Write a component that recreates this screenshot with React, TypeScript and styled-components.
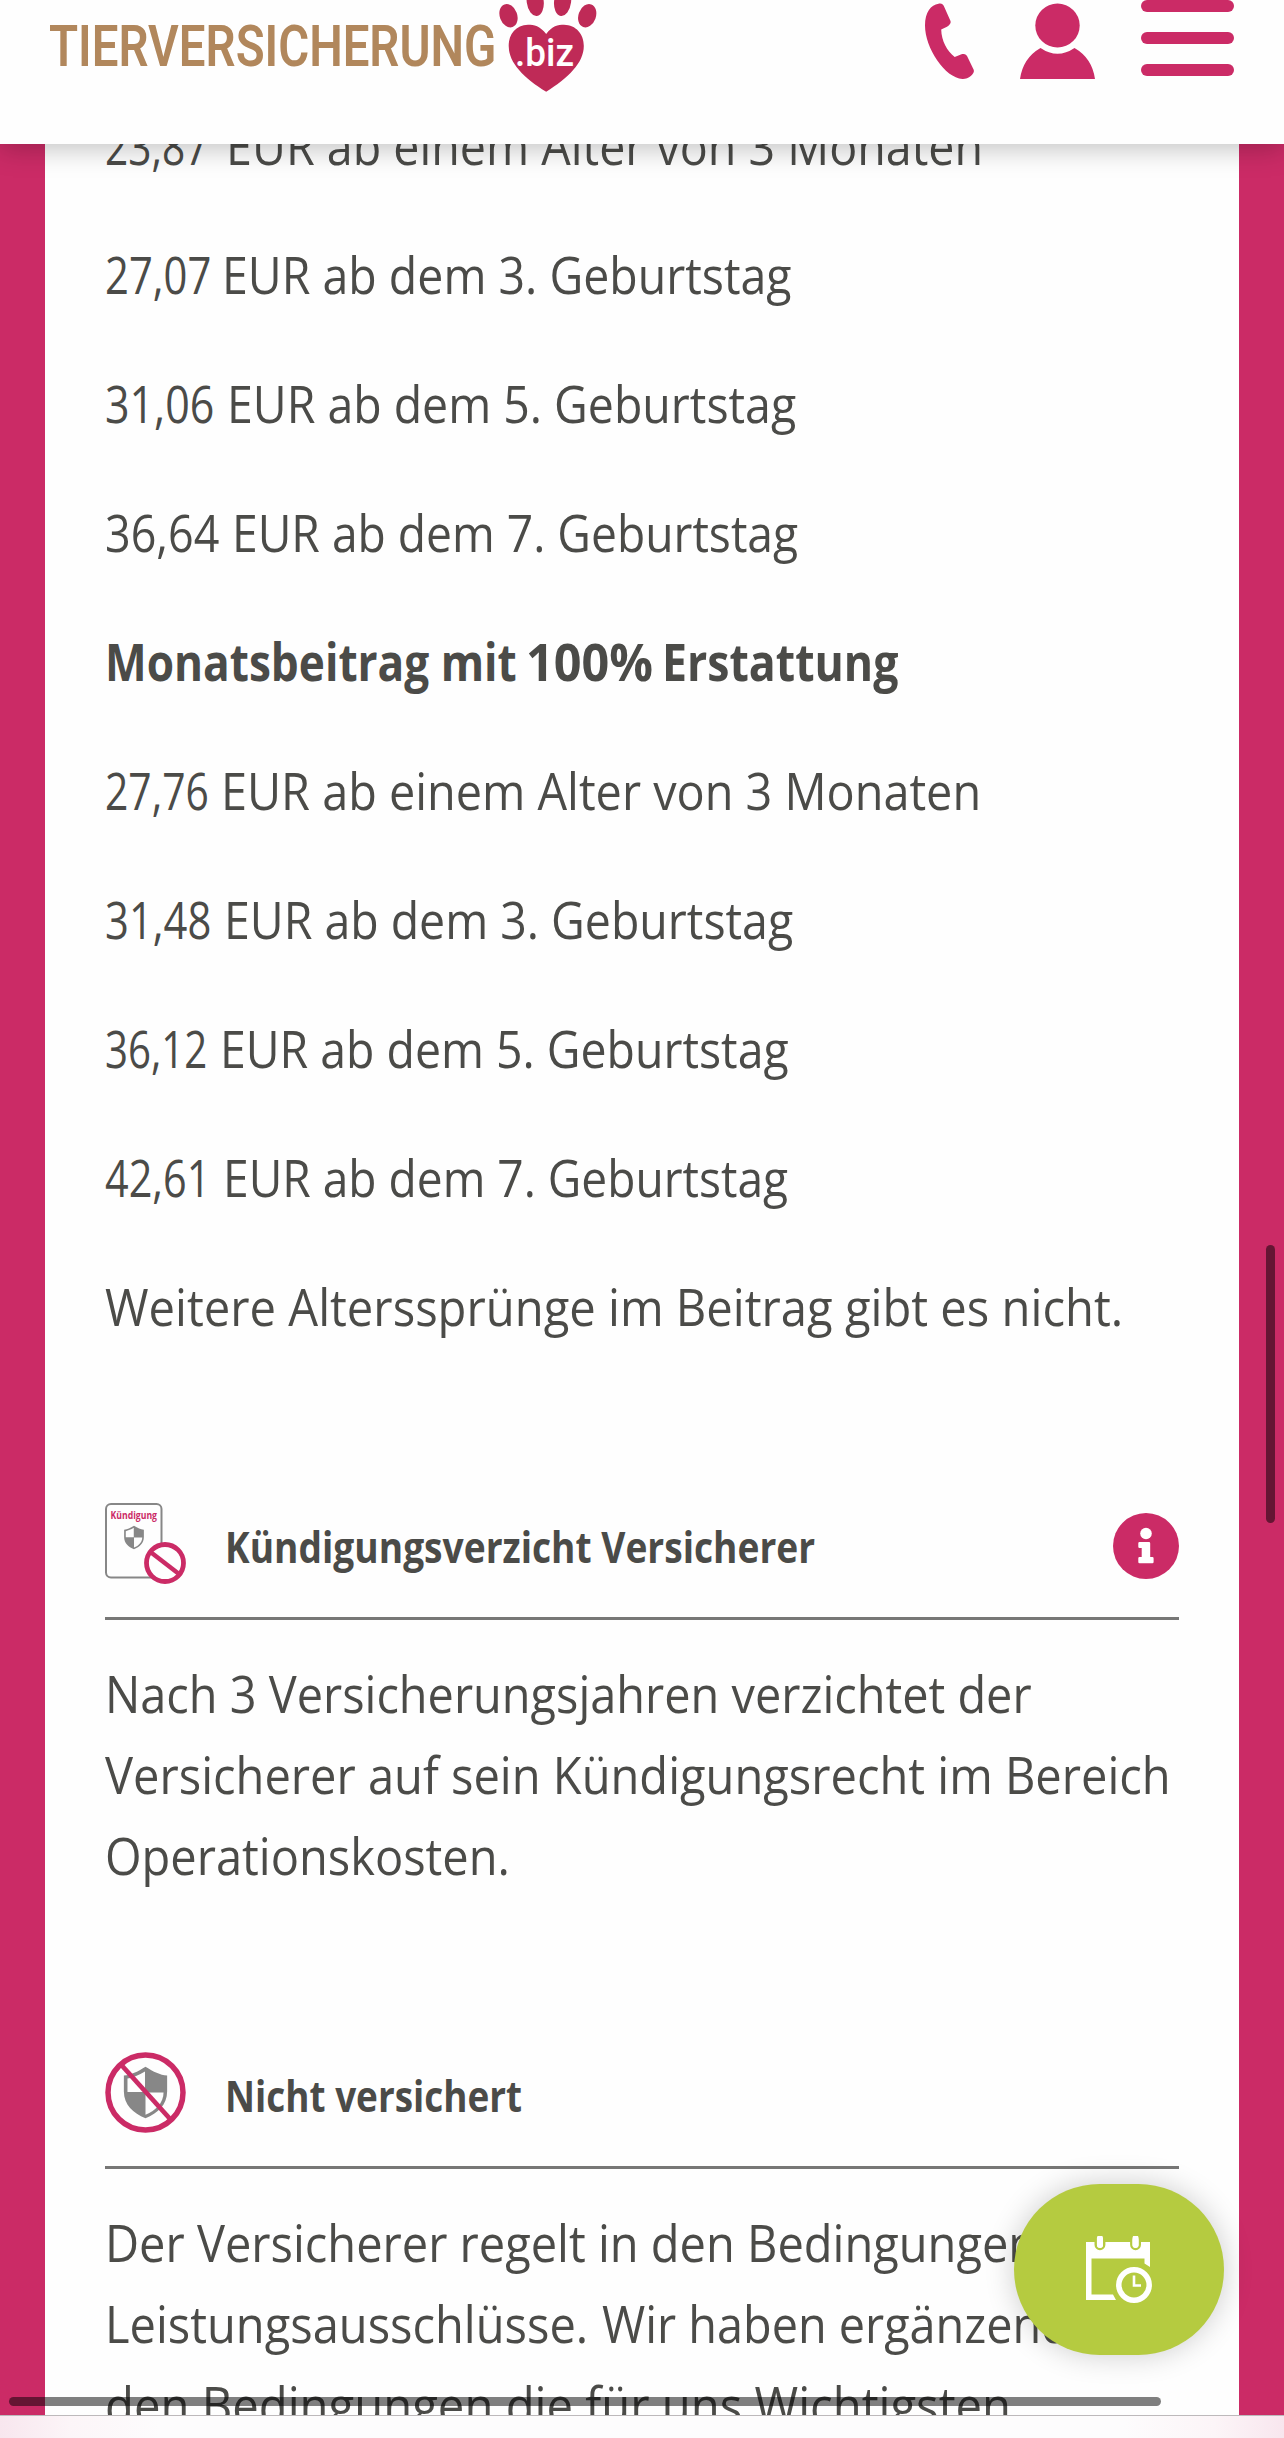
import React, { useLayoutEffect, useRef, useState } from 'react';
import styled, { createGlobalStyle } from 'styled-components';

const pink = '#cb2b66';
const ink = '#4b4b48';
const grey = '#878787';

const GlobalStyle = createGlobalStyle`
  * { box-sizing: border-box; }
  body { margin: 0; background: #fdfcfd; font-family: 'Open Sans', 'Noto Sans', sans-serif; }
  p, h2 { margin: 0; }
`;

const Page = styled.div`
  position: relative;
  display: flex;
  flex-direction: column;
  height: 2438px;
  width: 1284px;
  overflow: hidden;
`;

const Header = styled.header`
  position: relative;
  z-index: 2;
  flex: none;
  display: flex;
  justify-content: space-between;
  align-items: flex-start;
  height: 144px;
  padding: 0 50px 0 49px;
  background: #fefefe;
  box-shadow: 0 4px 26px rgba(0, 0, 0, 0.25);
`;

const Brand = styled.div`
  display: flex;
  align-items: flex-start;
`;

const BrandName = styled.div`
  width: 448px;
  padding-top: 14px;
  font: 600 57px/66px Roboto, sans-serif;
  color: #b1875c;
`;

const Paw = styled.svg`
  display: block;
  width: 102px;
  height: 94px;
`;

const Actions = styled.nav`
  display: flex;
  align-items: flex-start;
  gap: 45px;
  svg { display: block; }
`;

const MenuBars = styled.div`
  display: flex;
  flex-direction: column;
  gap: 20px;
  width: 93px;
`;

const Bar = styled.span`
  height: 12px;
  border-radius: 6px;
  background: ${pink};
`;

const Viewport = styled.main`
  flex: none;
  height: 2271px;
  padding: 0 45px;
  overflow: hidden;
  background: ${pink};
`;

const Sheet = styled.article`
  display: flow-root;
  height: 100%;
  padding: 0 60px;
  background: #fefefe;
`;

const Prices = styled.div`
  display: flex;
  flex-direction: column;
  gap: 48px;
  margin-top: -40px;
`;

const Line = styled.p<{ $bold?: boolean }>`
  display: flex;
  height: 81px;
  font-size: 52px;
  line-height: 81px;
  font-weight: ${(p) => (p.$bold ? 750 : 430)};
  color: ${ink};
`;

const Part = styled.span<{ $cell: number }>`
  flex: none;
  width: ${(p) => p.$cell}px;
  white-space: nowrap;
`;

const Section = styled.section`
  margin-top: 157px;
`;

const SectionHead = styled.div`
  display: flex;
  align-items: center;
  height: 117px;
  padding-bottom: 33px;
  border-bottom: 3px solid #777776;
  margin-bottom: 32px;
  svg { display: block; flex: none; }
`;

const Title = styled.h2`
  flex: 1;
  min-width: 0;
  padding-left: 38px;
  padding-top: 6px;
  font-size: 43.5px;
  line-height: 60px;
  font-weight: 750;
  color: ${ink};
`;

const InfoButton = styled.button`
  flex: none;
  margin-top: 5px;
  padding: 0;
  border: 0;
  background: none;
`;

const FitSpan = styled.span`
  display: inline-block;
  white-space: nowrap;
  transform-origin: 0 50%;
`;

const Fab = styled.button`
  position: absolute;
  z-index: 3;
  left: 1014px;
  top: 2184px;
  display: flex;
  align-items: center;
  justify-content: center;
  width: 210px;
  height: 171px;
  padding: 0;
  border: 0;
  border-radius: 86px;
  background: #b5cb40;
  box-shadow: 0 0 30px rgba(0, 0, 0, 0.2);
`;

const Thumb = styled.div<{ $x: number; $y: number; $w: number; $h: number }>`
  position: absolute;
  z-index: 4;
  left: ${(p) => p.$x}px;
  top: ${(p) => p.$y}px;
  width: ${(p) => p.$w}px;
  height: ${(p) => p.$h}px;
  border-radius: 5px;
  background: rgba(0, 0, 0, 0.5);
`;

const BrowserEdge = styled.footer`
  position: relative;
  z-index: 1;
  flex: 1;
  border-top: 1px solid #bdb9bb;
  background: linear-gradient(90deg, #f8e6ee 0, #fcf5f8 70px, #fdfcfd 160px, #fdfcfd 1124px, #fcf5f8 1214px, #f8e6ee 1284px);
`;

/* Condenses a single line of text so that it spans the given width. */
function Fit({ width, children }: { width: number; children: string }) {
  const ref = useRef<HTMLSpanElement>(null);
  const [scale, setScale] = useState(1);
  useLayoutEffect(() => {
    if (ref.current) setScale(width / ref.current.offsetWidth);
  }, [width]);
  return (
    <FitSpan ref={ref} style={{ transform: `scaleX(${scale})` }}>
      {children}
    </FitSpan>
  );
}

const SHIELD = 'M0-25 C8-20 14-17 21-16.500 V-1 C21 12 12 20 0 25 C-12 20-21 12-21-1 V-16.500 C-14-17-8-20 0-25Z';

function Shield({ x, y, scale }: { x: number; y: number; scale: number }) {
  return (
    <g transform={`translate(${x} ${y}) scale(${scale})`}>
      <path d={SHIELD} fill={grey} />
      <path d="M-.5-20.500 V-.5 H-17.500 V-13.500 C-12-14.500-6.500-17-.5-20.500Z" fill="#fefefe" />
      <path d="M0 0 H17.500 C17.500 10 10 17.500 0 21.500Z" fill="#fefefe" />
    </g>
  );
}

function CancelIcon() {
  return (
    <svg width="82" height="82" viewBox="0 0 82 82">
      <rect x="1" y="1" width="55.500" height="73.500" rx="5" fill="none" stroke={grey} strokeWidth="2" />
      <text x="5.500" y="15.500" textLength="46.500" lengthAdjust="spacingAndGlyphs" fontSize="11" fontWeight="700" fill={pink}>Kündigung</text>
      <Shield x={29} y={34.500} scale={0.47} />
      <circle cx="60" cy="60" r="18.500" fill="#fefefe" stroke={pink} strokeWidth="4.800" />
      <path d="M45.500 49 L74 71" stroke={pink} strokeWidth="4.500" />
    </svg>
  );
}

function NotInsuredIcon() {
  return (
    <svg width="82" height="82" viewBox="0 0 82 82">
      <Shield x={40.500} y={40.500} scale={1.03} />
      <circle cx="40.500" cy="40.500" r="37.500" fill="none" stroke={pink} strokeWidth="5.500" />
      <path d="M15.500 12 L66 68" stroke={pink} strokeWidth="4.800" />
    </svg>
  );
}

function InfoIcon() {
  return (
    <svg width="66" height="66" viewBox="0 0 66 66">
      <circle cx="33" cy="33" r="33" fill={pink} />
      <circle cx="33" cy="20.500" r="5.800" fill="#fff" />
      <path d="M26.500 29 h9.500 q1.200 0 1.200 1.200 V44 h2.200 q1.200 0 1.200 1.200 V49 q0 1.200-1.200 1.200 H26.500 q-1.200 0-1.200-1.200 V45.200 q0-1.200 1.200-1.200 h2.200 V35 h-2.200 q-1.200 0-1.200-1.200 V30.200 q0-1.200 1.200-1.200Z" fill="#fff" />
    </svg>
  );
}

function PhoneIcon() {
  return (
    <svg width="50" height="80" viewBox="0 0 50 80">
      <path d="M13.500 3.800 C16.500 3 18.500 4.500 19.500 7.500 L25.500 21 C26.300 23.500 24 25.500 22 26.700 L16.200 29.500 C16.500 41 22 51 29.700 57 L36.500 54.300 C40 53.300 41.800 55 43 58 L48.800 70 C50 74 43 79.300 37.500 79 C20 78 0 48 0 25.500 C0 12 6 5 13.500 3.800Z" fill={pink} />
    </svg>
  );
}

function PersonIcon() {
  return (
    <svg width="76" height="80" viewBox="0 0 76 80">
      <ellipse cx="37.500" cy="25.500" rx="22.200" ry="22" fill={pink} />
      <path d="M20.500 48 Q37.500 59.500 54.500 48 Q72 58 75 79 H0 Q3 58 20.500 48Z" fill={pink} />
    </svg>
  );
}

function CalendarIcon() {
  return (
    <svg width="68" height="68" viewBox="0 0 68 68">
      <path d="M1 6 H65 V31 L59.500 27.500 V22.500 H6.500 V58.500 H28 L31 64 H1Z" fill="#fff" />
      <rect x="10.700" y="-2" width="8.500" height="15" rx="4.200" fill="#fff" stroke="#b5cb40" strokeWidth="2.400" />
      <rect x="46.300" y="-2" width="8.500" height="15" rx="4.200" fill="#fff" stroke="#b5cb40" strokeWidth="2.400" />
      <rect x="12" y="1" width="6" height="11" rx="3" fill="#fff" />
      <rect x="47.500" y="1" width="6" height="11" rx="3" fill="#fff" />
      <circle cx="49" cy="49" r="15.200" fill="#b5cb40" stroke="#fff" strokeWidth="5.500" />
      <path d="M49 39.500 V49.500 H56" fill="none" stroke="#fff" strokeWidth="2.600" />
    </svg>
  );
}

function Logo() {
  return (
    <Paw viewBox="497 0 102 94">
      <g fill="#bf2a57">
        <ellipse cx="508.500" cy="15.700" rx="8.700" ry="12" transform="rotate(-20 508.500 15.700)" />
        <ellipse cx="535.200" cy="1.500" rx="8.500" ry="14.500" transform="rotate(-7 535.200 1.500)" />
        <ellipse cx="562.600" cy="1.500" rx="8.500" ry="14.500" transform="rotate(7 562.600 1.500)" />
        <ellipse cx="587.200" cy="15.700" rx="8.700" ry="12" transform="rotate(20 587.200 15.700)" />
        <path d="M546.200 34 C552 26 558 24.800 564 24.800 C576 25 583.800 34 583.800 46 C583.800 63 568 78 546.200 91.800 C524 78 508.700 63 508.700 46 C508.700 34 516 25 528 24.800 C534 24.800 540 26 546.200 34Z" />
      </g>
      <text x="515" y="65.700" textLength="59" lengthAdjust="spacingAndGlyphs" fontFamily="Roboto, sans-serif" fontSize="38" fontWeight="500" fill="#fff">.biz</text>
    </Paw>
  );
}

/* Each part: text, width of its glyphs, and the cell it takes up to the next part. */
type TextPart = [text: string, width: number, cell: number];
type Row = { parts: TextPart[]; bold?: boolean };

const one = (text: string, width: number): Row => ({ parts: [[text, width, width]] });
const price = (amount: string, amountWidth: number, cell: number, rest: string, total: number): Row => ({
  parts: [[amount, amountWidth, cell], [rest, total - cell, total - cell]],
});

const prices: Row[] = [
  price('23,87', 103, 120.5, 'EUR ab einem Alter von 3 Monaten', 878),
  price('27,07', 106, 116.5, 'EUR ab dem 3. Geburtstag', 686),
  price('31,06', 109, 122, 'EUR ab dem 5. Geburtstag', 691),
  price('36,64', 114, 127, 'EUR ab dem 7. Geburtstag', 693),
  { bold: true, parts: [['Monatsbeitrag mit', 412, 421], ['100%', 127, 136], ['Erstattung', 236, 236]] },
  price('27,76', 103.5, 115.5, 'EUR ab einem Alter von 3 Monaten', 876),
  price('31,48', 106, 119, 'EUR ab dem 3. Geburtstag', 688),
  price('36,12', 102, 114.5, 'EUR ab dem 5. Geburtstag', 683),
  price('42,61', 105, 118, 'EUR ab dem 7. Geburtstag', 683),
  one('Weitere Alterssprünge im Beitrag gibt es nicht.', 1018),
];

const waiver: Row[] = [
  one('Nach 3 Versicherungsjahren verzichtet der', 927),
  one('Versicherer auf sein Kündigungsrecht im Bereich', 1066),
  one('Operationskosten.', 405),
];

const exclusions: Row[] = [
  one('Der Versicherer regelt in den Bedingungen', 932),
  { parts: [['Leistungsausschlüsse.', 483, 497], ['Wir haben ergänzend', 468, 468]] },
  one('den Bedingungen die für uns Wichtigsten', 906),
];

function Lines({ rows }: { rows: Row[] }) {
  return (
    <>
      {rows.map((row) => (
        <Line key={row.parts[0][0]} $bold={row.bold}>
          {row.parts.map(([text, width, cell]) => (
            <Part key={text} $cell={cell}><Fit width={width}>{text}</Fit></Part>
          ))}
        </Line>
      ))}
    </>
  );
}

export default function App() {
  return (
    <Page>
      <GlobalStyle />
      <Header>
        <Brand>
          <BrandName><Fit width={447}>TIERVERSICHERUNG</Fit></BrandName>
          <Logo />
        </Brand>
        <Actions>
          <PhoneIcon />
          <PersonIcon />
          <MenuBars><Bar /><Bar /><Bar /></MenuBars>
        </Actions>
      </Header>
      <Viewport>
        <Sheet>
          <Prices><Lines rows={prices} /></Prices>
          <Section>
            <SectionHead>
              <CancelIcon />
              <Title><Fit width={590}>Kündigungsverzicht Versicherer</Fit></Title>
              <InfoButton aria-label="Info"><InfoIcon /></InfoButton>
            </SectionHead>
            <Lines rows={waiver} />
          </Section>
          <Section>
            <SectionHead>
              <NotInsuredIcon />
              <Title><Fit width={297}>Nicht versichert</Fit></Title>
            </SectionHead>
            <Lines rows={exclusions} />
          </Section>
        </Sheet>
      </Viewport>
      <BrowserEdge />
      <Fab aria-label="Termin vereinbaren"><CalendarIcon /></Fab>
      <Thumb $x={1266} $y={1245} $w={9} $h={278} />
      <Thumb $x={9} $y={2397} $w={1152} $h={9} />
    </Page>
  );
}
